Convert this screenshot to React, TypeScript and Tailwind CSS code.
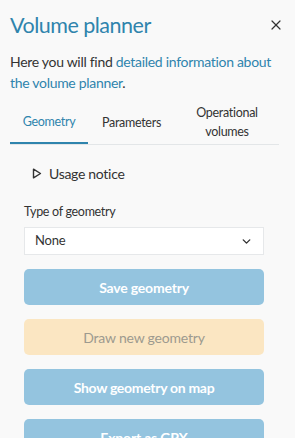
import { X, ChevronDown } from "lucide-react";

const font = { fontFamily: "Lato, 'Noto Sans', sans-serif" };

export default function App() {
  return (
    <div className="w-[295px] h-[438px] overflow-hidden bg-[#f9f9f9] text-[#2b2b2b]" style={font}>
      <div className="flex items-center justify-between pl-[10px] pr-[11px] pt-[10px]">
        <h1 className="text-[21.5px] leading-[30px] tracking-[-0.5px] text-[#2f84ad]">Volume planner</h1>
        <X size={16} strokeWidth={1.8} className="text-[#333]" />
      </div>

      <p className="pl-[10px] pr-[10px] mt-[11px] text-[14px] leading-[21px] tracking-[-0.3px] text-[#333]">
        Here you will find{" "}
        <a className="text-[#2f84ad]">detailed information about the volume planner</a>.
      </p>

      <div className="ml-[10px] mr-[16px] mt-[7px] flex border-b border-[#e3e6e8] text-[12.5px] leading-[19px] tracking-[-0.3px]">
        <div className="w-[78px] h-[44px] flex items-center justify-center text-[#2f84ad] border-b-2 border-[#2f84ad] -mb-px">
          Geometry
        </div>
        <div className="w-[87px] h-[44px] flex items-center justify-center text-[#333]">Parameters</div>
        <div className="flex-1 h-[44px] flex items-center justify-center text-center text-[#333]">
          Operational
          <br />
          volumes
        </div>
      </div>

      <div className="pl-[24px] pr-[31px]">
        <div className="mt-[18px] flex items-center gap-[7px] pl-[8px] text-[14px] tracking-[-0.3px] text-[#333]">
          <svg width="10" height="11" viewBox="0 0 10 11" fill="none" stroke="#333" strokeWidth="1.4" strokeLinejoin="round">
            <path d="M1.5 1.2 L8.5 5.5 L1.5 9.8 Z" />
          </svg>
          <span>Usage notice</span>
        </div>

        <div className="mt-[19px] text-[12.5px] leading-[18px] tracking-[-0.3px] text-[#333]">Type of geometry</div>

        <div className="mt-[6px] h-[28px] bg-white border border-[#e6e8ea] flex items-center justify-between pl-[10px] pr-[10px] text-[13px] tracking-[-0.2px] text-[#333]">
          <span>None</span>
          <ChevronDown size={13} strokeWidth={2.6} className="text-[#333]" />
        </div>

        <div className="mt-[14px] flex flex-col gap-[14px]">
          <button className="h-[36px] rounded-[5px] bg-[#94c4df] text-white font-bold text-[14px] tracking-[-0.2px]">Save geometry</button>
          <button className="h-[36px] rounded-[5px] bg-[#fbe6c2] text-[#9d9a8f] text-[14px] tracking-[-0.2px]">Draw new geometry</button>
          <button className="h-[36px] rounded-[5px] bg-[#94c4df] text-white font-bold text-[14px] tracking-[-0.3px]">Show geometry on map</button>
          <button className="h-[36px] shrink-0 rounded-[5px] bg-[#94c4df] text-white font-bold text-[14px] tracking-[-0.2px]">Export as GPX</button>
        </div>
      </div>
    </div>
  );
}
